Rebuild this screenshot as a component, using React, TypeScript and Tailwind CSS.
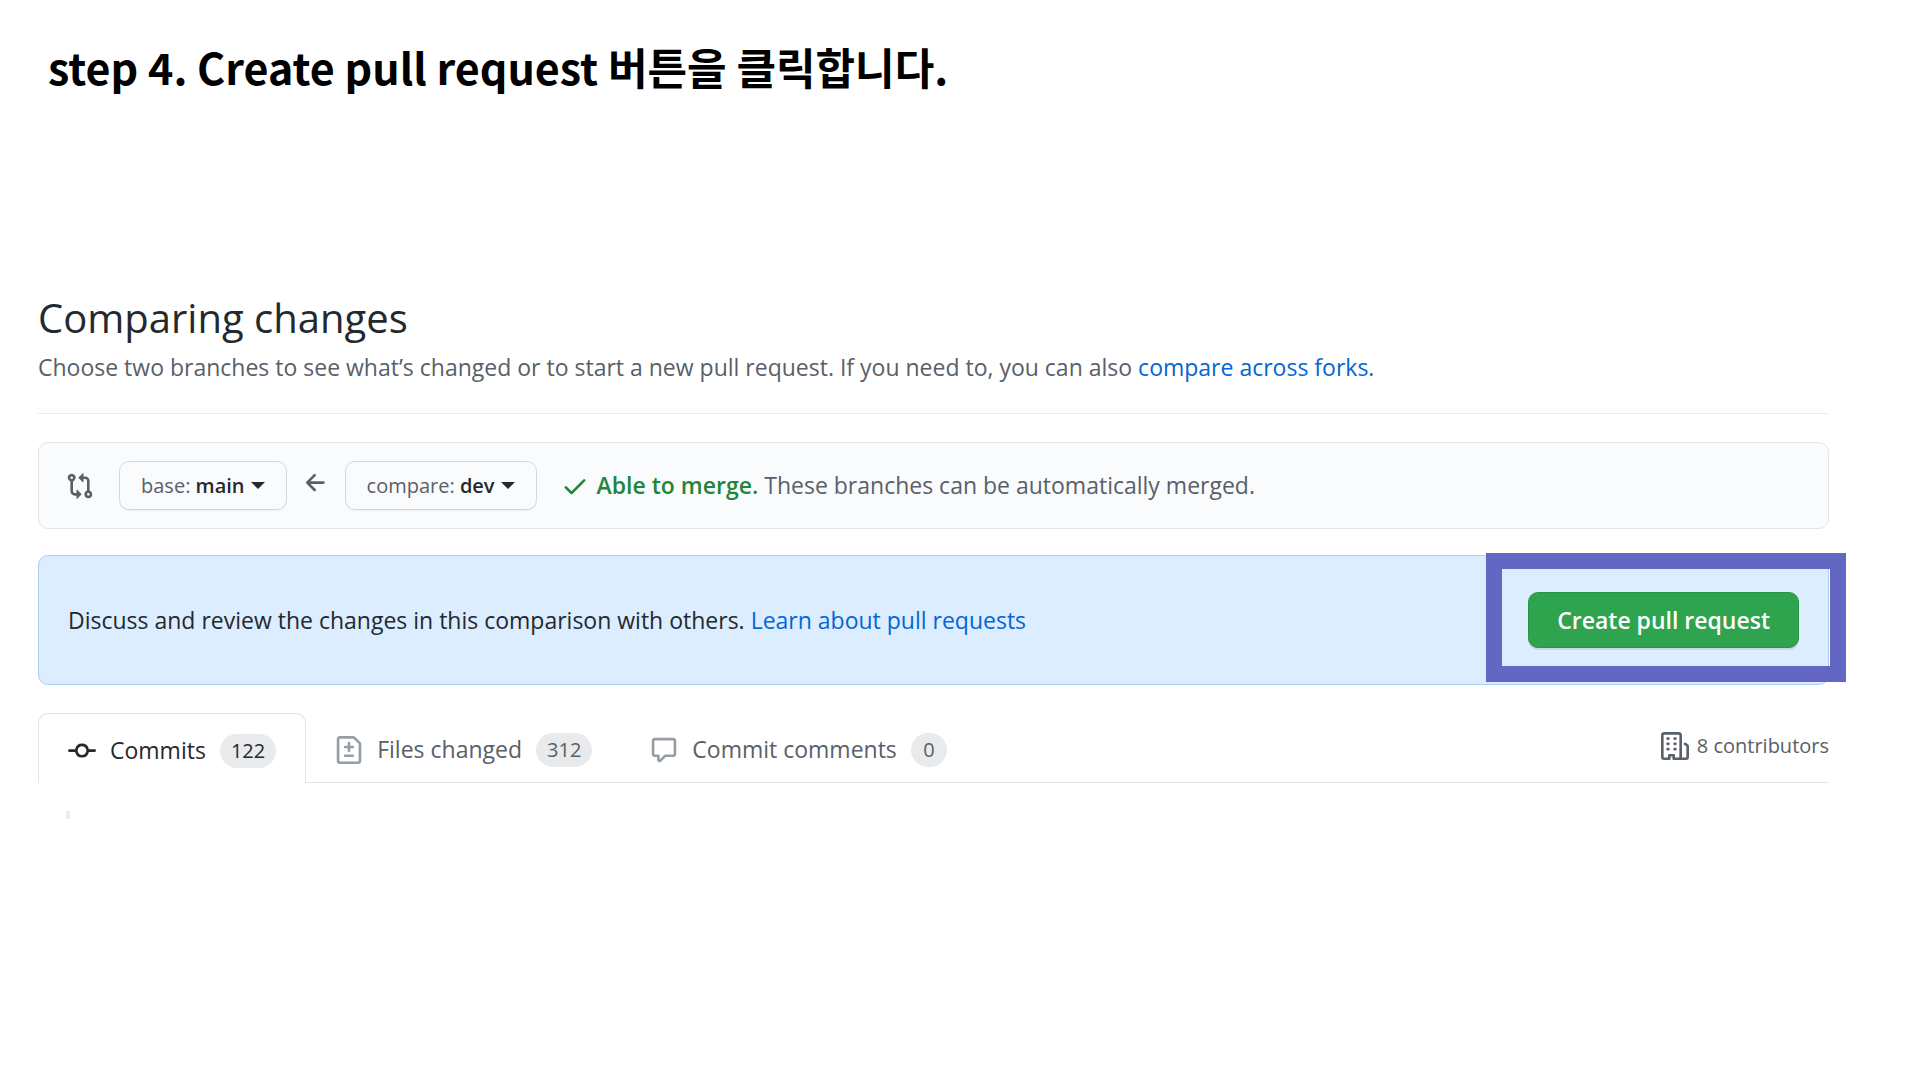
import type { ReactNode } from "react";

const PATHS = {
  compare:
    "M9.573.677L7.177 3.073a.25.25 0 000 .354l2.396 2.396A.25.25 0 0010 5.646V4h1a1 1 0 011 1v5.628a2.251 2.251 0 101.5 0V5A2.5 2.5 0 0011 2.5h-1V.854a.25.25 0 00-.427-.177zM6 12v-1.646a.25.25 0 01.427-.177l2.396 2.396a.25.25 0 010 .354l-2.396 2.396A.25.25 0 016 15.146V13.5H5A2.5 2.5 0 012.5 11V5.372a2.25 2.25 0 111.5 0V11a1 1 0 001 1h1zm6.75 0a.75.75 0 100 1.5.75.75 0 000-1.5zM4 3.25a.75.75 0 11-1.5 0 .75.75 0 011.5 0z",
  arrowLeft:
    "M7.78 12.53a.75.75 0 01-1.06 0L2.47 8.28a.75.75 0 010-1.06l4.25-4.25a.75.75 0 011.06 1.06L4.81 7h7.44a.75.75 0 010 1.5H4.81l2.97 2.97a.75.75 0 010 1.06z",
  check:
    "M13.78 4.22a.75.75 0 010 1.06l-7.25 7.25a.75.75 0 01-1.06 0L2.22 9.28a.75.75 0 011.06-1.06L6 10.94l6.72-6.72a.75.75 0 011.06 0z",
  commit:
    "M10.5 7.75a2.5 2.5 0 11-5 0 2.5 2.5 0 015 0zm1.43.75a4.002 4.002 0 01-7.86 0H.75a.75.75 0 110-1.5h3.32a4.001 4.001 0 017.86 0h3.32a.75.75 0 110 1.5h-3.32z",
  fileDiff:
    "M2.75 1.5a.25.25 0 00-.25.25v12.5c0 .138.112.25.25.25h10.5a.25.25 0 00.25-.25V4.664a.25.25 0 00-.073-.177l-2.914-2.914a.25.25 0 00-.177-.073H2.75zM1 1.75C1 .784 1.784 0 2.75 0h7.586c.464 0 .909.184 1.237.513l2.914 2.914c.329.328.513.773.513 1.237v9.586A1.75 1.75 0 0113.25 16H2.75A1.75 1.75 0 011 14.25V1.75zm7 1.5a.75.75 0 01.75.75v1.5h1.5a.75.75 0 010 1.5h-1.5v1.5a.75.75 0 01-1.5 0V7h-1.5a.75.75 0 010-1.5h1.5V4A.75.75 0 018 3.25zm-3 8a.75.75 0 01.75-.75h4.5a.75.75 0 010 1.5h-4.5a.75.75 0 01-.75-.75z",
  comment:
    "M2.75 2.5a.25.25 0 00-.25.25v7.5c0 .138.112.25.25.25h2a.75.75 0 01.75.75v2.19l2.72-2.72a.75.75 0 01.53-.22h4.5a.25.25 0 00.25-.25v-7.5a.25.25 0 00-.25-.25H2.75zM1 2.75C1 1.784 1.784 1 2.75 1h10.5c.966 0 1.75.784 1.75 1.75v7.5A1.75 1.75 0 0113.25 12H9.06l-2.573 2.573A1.457 1.457 0 014 13.543V12H2.75A1.75 1.75 0 011 10.25v-7.5z",
  organization:
    "M1.5 14.25c0 .138.112.25.25.25H4v-1.25a.75.75 0 01.75-.75h2.5a.75.75 0 01.75.75v1.25h2.25a.25.25 0 00.25-.25V1.75a.25.25 0 00-.25-.25h-8.5a.25.25 0 00-.25.25v12.5zM1.75 16A1.75 1.75 0 010 14.25V1.75C0 .784.784 0 1.75 0h8.5C11.216 0 12 .784 12 1.75v12.5c0 .085-.006.168-.018.25h2.268a.25.25 0 00.25-.25V8.285a.25.25 0 00-.111-.208l-1.055-.703a.75.75 0 11.832-1.248l1.055.703c.487.325.779.871.779 1.456v5.965A1.75 1.75 0 0114.25 16h-3.5a.75.75 0 01-.197-.026c-.099.017-.2.026-.303.026h-3a.75.75 0 01-.75-.75V14h-1v1.25a.75.75 0 01-.75.75h-3zM3 3.75A.75.75 0 013.75 3h.5a.75.75 0 010 1.5h-.5A.75.75 0 013 3.75zM3.75 6a.75.75 0 000 1.5h.5a.75.75 0 000-1.5h-.5zM3 9.75A.75.75 0 013.75 9h.5a.75.75 0 010 1.5h-.5A.75.75 0 013 9.75zM7.75 9a.75.75 0 000 1.5h.5a.75.75 0 000-1.5h-.5zM7 6.75A.75.75 0 017.75 6h.5a.75.75 0 010 1.5h-.5A.75.75 0 017 6.75zM7.75 3a.75.75 0 000 1.5h.5a.75.75 0 000-1.5h-.5z",
};

function Icon({ name, className = "" }: { name: keyof typeof PATHS; className?: string }) {
  return (
    <svg viewBox="0 0 16 16" fill="currentColor" aria-hidden="true" className={`size-7 shrink-0 ${className}`}>
      <path fillRule="evenodd" d={PATHS[name]} />
    </svg>
  );
}

function BranchButton({ label, branch }: { label: string; branch: string }) {
  return (
    <button
      type="button"
      className="flex h-[49px] items-center rounded-[10px] border border-[#d5d8da] bg-[#fafbfc] px-[21px] text-xl text-[#586069] shadow-[0_1px_0_rgba(27,31,35,0.05)]"
    >
      <span>
        {label}: <span className="font-semibold text-[#24292e]">{branch}</span>
      </span>
      <svg viewBox="0 0 14 7" fill="#24292e" aria-hidden="true" className="ml-1.5 h-[7px] w-3.5">
        <path d="M0 0h14L7 7z" />
      </svg>
    </button>
  );
}

function Tab({
  icon,
  count,
  active = false,
  children,
}: {
  icon: keyof typeof PATHS;
  count: number;
  active?: boolean;
  children: ReactNode;
}) {
  return (
    <a
      href="#"
      aria-current={active ? "page" : undefined}
      className={
        active
          ? "-mb-px flex h-[70px] items-center rounded-t-[10px] border border-b-0 border-[#e1e4e8] bg-white px-[29px] pt-1 text-[#24292e]"
          : "flex items-center px-[29px] pt-1 text-[#586069]"
      }
    >
      <Icon name={icon} className={active ? "" : "text-[#959da5]"} />
      <span className="ml-3.5">{children}</span>
      <span className="ml-3.5 flex h-[34px] min-w-9 items-center justify-center rounded-full bg-[#e8eaec] px-[11px] text-xl font-medium">
        {count}
      </span>
    </a>
  );
}

export default function App() {
  return (
    <div className="min-h-screen bg-white pr-[91px] pl-[38px] font-['Open_Sans','Noto_Sans_CJK_KR',sans-serif] text-[23px] text-[#24292e]">
      <h1 className="pt-[34px] pl-2.5 font-['Noto_Sans_CJK_KR',sans-serif] text-[43px] leading-[64px] font-bold text-black">
        step 4. Create pull request 버튼을 클릭합니다.
      </h1>

      <main className="pt-[190px]">
        <header className="border-b border-[#eaecef] pb-7">
          <h2 className="text-[40px] leading-[60px]">Comparing changes</h2>
          <p className="mt-px leading-9 text-[#586069]">
            Choose two branches to see what’s changed or to start a new pull request. If you need to, you can also{" "}
            <a href="#" className="text-[#0366d6]">
              compare across forks
            </a>
            .
          </p>
        </header>

        <section className="mt-7 flex h-[87px] items-center rounded-[10px] border border-[#e1e4e8] bg-[#fafbfc] pl-[27px]">
          <Icon name="compare" className="mr-[25px] text-[#586069]" />
          <BranchButton label="base" branch="main" />
          <Icon name="arrowLeft" className="mr-[15px] mb-1.5 ml-[15px] text-[#586069]" />
          <BranchButton label="compare" branch="dev" />
          <Icon name="check" className="mr-2 ml-6 text-[#22863a]" />
          <p className="text-[#586069]">
            <strong className="font-semibold text-[#22863a]">Able to merge.</strong> These branches can be automatically
            merged.
          </p>
        </section>

        <section className="relative mt-[26px] flex h-[130px] items-center justify-between rounded-[10px] border border-[#b1cdec] bg-[#dbedff] px-[29px]">
          <p>
            Discuss and review the changes in this comparison with others.{" "}
            <a href="#" className="text-[#0366d6]">
              Learn about pull requests
            </a>
          </p>
          <button
            type="button"
            className="h-14 rounded-[10px] border border-[#2b9348] bg-[#2ea44f] px-7 font-semibold text-white shadow-[0_2px_0_rgba(27,31,35,0.1)]"
          >
            Create pull request
          </button>
          <div className="pointer-events-none absolute -top-[3px] -right-[18px] h-[129px] w-[360px] border-16 border-[#6466c4]" />
        </section>

        <nav className="mt-7 flex h-[70px] border-b border-[#e1e4e8]">
          <Tab icon="commit" count={122} active>
            Commits
          </Tab>
          <Tab icon="fileDiff" count={312}>
            Files changed
          </Tab>
          <Tab icon="comment" count={0}>
            Commit comments
          </Tab>
          <div className="mb-1 ml-auto flex items-center gap-2 text-xl text-[#586069]">
            <Icon name="organization" />8 contributors
          </div>
        </nav>

        <div className="mt-7 ml-7 h-2 w-1 bg-[#ececec]" />
      </main>
    </div>
  );
}
